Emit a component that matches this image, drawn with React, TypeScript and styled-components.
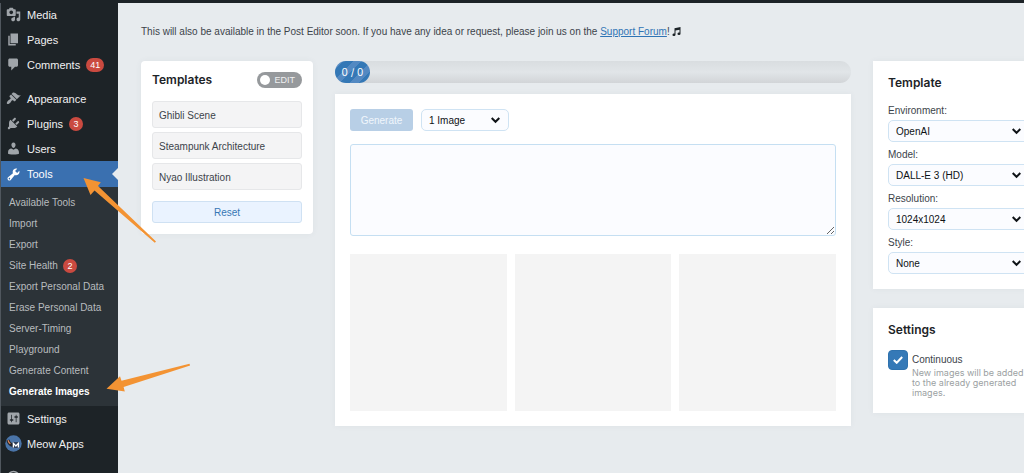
import React from "react";
import styled, { createGlobalStyle, css } from "styled-components";

const GlobalStyle = createGlobalStyle`
  *, *::before, *::after { box-sizing: border-box; }
  body {
    margin: 0;
    background: #e7ebee;
    color: #3c434a;
    font-family: "Liberation Sans", Arial, sans-serif;
    font-size: 10px;
    line-height: 16px;
    overflow: hidden;
  }
  button, select, textarea, input { font-family: inherit; margin: 0; }
`;

const Page = styled.div`
  min-height: 100vh;
  display: flex;
  flex-direction: column;
`;

const AdminBar = styled.header`
  flex: none;
  height: 3px;
  background: #1d2327;
`;

const Body = styled.div`
  flex: 1;
  display: flex;
`;

const Sidebar = styled.nav`
  flex: none;
  width: 118px;
  height: calc(100vh - 3px);
  overflow: hidden;
  background: #1d2327;
  border-left: 1px solid #50575e;
`;

const Menu = styled.ul`
  list-style: none;
  margin: -1px 0 0;
  padding: 0;
`;

const MenuItem = styled.li<{ $gap?: boolean }>`
  margin-top: ${(p) => (p.$gap ? "9px" : "0")};
`;

const MenuLink = styled.a<{ $active?: boolean }>`
  position: relative;
  display: flex;
  align-items: center;
  gap: 6px;
  height: ${(p) => (p.$active ? "26px" : "25px")};
  padding-left: 5px;
  color: #f0f0f1;
  font-size: 11px;
  text-decoration: none;
  white-space: nowrap;
  ${(p) =>
    p.$active &&
    css`
      background: #3a70b0;
      color: #fff;
      &::after {
        content: "";
        position: absolute;
        right: 0;
        top: 7px;
        border: 6px solid transparent;
        border-left: 0;
        border-right-color: #e7ebee;
      }
    `}
`;

const MenuIcon = styled.svg<{ $active?: boolean }>`
  flex: none;
  width: 15px;
  height: 15px;
  fill: ${(p) => (p.$active ? "#fff" : "#a0a5aa")};
`;

const Logo = styled.svg`
  flex: none;
  width: 17px;
  height: 17px;
  margin: 0 -1px;
`;

const Badge = styled.span`
  min-width: 14px;
  height: 14px;
  padding: 0 4px;
  border-radius: 7px;
  background: #ca4a40;
  color: #fff;
  font-size: 9px;
  line-height: 14px;
  text-align: center;
`;

const SubMenu = styled.ul`
  list-style: none;
  margin: 0;
  padding: 5px 0 4px;
  background: #2c3338;
`;

const SubLink = styled.a<{ $current?: boolean }>`
  display: flex;
  align-items: center;
  gap: 5px;
  height: 21px;
  padding-left: 8px;
  color: ${(p) => (p.$current ? "#fff" : "#b8bcbf")};
  font-weight: ${(p) => (p.$current ? 700 : 400)};
  text-decoration: none;
  white-space: nowrap;
`;

const Main = styled.main`
  flex: 1;
  min-width: 0;
  overflow: hidden;
  padding: 21px 0 0 23px;
`;

const Intro = styled.p`
  margin: 0 0 21px;
`;

const TextLink = styled.a`
  color: #2f74b5;
`;

const Note = styled.svg`
  width: 9px;
  height: 9px;
  vertical-align: -1px;
  fill: #1d2327;
`;

const Columns = styled.div`
  display: grid;
  grid-template-columns: minmax(0, 1fr) minmax(0, 3fr) minmax(0, 1fr);
  gap: 22px;
  align-items: start;
  margin-right: -21px;
`;

const Column = styled.div`
  display: flex;
  flex-direction: column;
  gap: 19px;
`;

const Card = styled.section<{ $narrow?: boolean }>`
  padding: ${(p) => (p.$narrow ? "11px" : "15px")};
  border-radius: ${(p) => (p.$narrow ? "4px" : "0")};
  background: #fff;
  box-shadow: 0 0 6px rgba(60, 80, 100, 0.06);
`;

const Title = styled.h2`
  margin: 0;
  color: #1d2327;
  font-family: Inter, "Liberation Sans", sans-serif;
  font-size: 12px;
  font-weight: 600;
  line-height: 14px;
`;

const CardHeader = styled.div`
  display: flex;
  align-items: center;
  justify-content: space-between;
  margin-bottom: 13px;
`;

const Toggle = styled.button`
  display: flex;
  align-items: center;
  justify-content: space-between;
  width: 45px;
  height: 16px;
  padding: 0 7px 0 3px;
  border: 0;
  border-radius: 8px;
  background: #96999c;
  color: #f0f0f1;
  font-size: 9px;
  line-height: 16px;
`;

const Knob = styled.span`
  width: 10px;
  height: 10px;
  border-radius: 50%;
  background: #fff;
`;

const TemplateList = styled.div`
  display: flex;
  flex-direction: column;
  gap: 4px;
  margin-bottom: 11px;
`;

const TemplateButton = styled.button`
  height: 27px;
  padding: 1px 6px 0;
  border: 1px solid #e6e7e9;
  border-radius: 3px;
  background: #f4f4f5;
  color: #3c434a;
  font-size: 10px;
  text-align: left;
`;

const ResetButton = styled.button`
  display: block;
  width: 100%;
  height: 22px;
  padding: 0;
  border: 1px solid #cfe1f3;
  border-radius: 3px;
  background: #eaf3ff;
  color: #3677b5;
  font-size: 10px;
`;

const Progress = styled.div`
  height: 22px;
  margin-bottom: 11px;
  border-radius: 11px;
  background: linear-gradient(#d9dde0, #e1e5e8 50%, #d2d5d8);
`;

const ProgressPill = styled.div`
  width: 35px;
  height: 22px;
  border-radius: 11px;
  background: repeating-linear-gradient(135deg, #5389c2 0 6px, #3478b6 6px 13px);
  color: #fff;
  font-family: Inter, "Liberation Sans", sans-serif;
  font-size: 10px;
  line-height: 22px;
  text-align: center;
`;

const Toolbar = styled.div`
  display: flex;
  gap: 8px;
  margin-bottom: 13px;
`;

const GenerateButton = styled.button`
  width: 63px;
  height: 22px;
  padding: 0;
  border: 0;
  border-radius: 3px;
  background: #b8cfe6;
  color: #f0f6fc;
  font-size: 10px;
`;

const SelectBox = styled.div<{ $width?: string }>`
  position: relative;
  width: ${(p) => p.$width ?? "100%"};
`;

const NativeSelect = styled.select`
  display: block;
  appearance: none;
  width: 100%;
  height: 22px;
  padding: 0 24px 0 7px;
  border: 1px solid #cfe3f3;
  border-radius: 5px;
  background: #fbfcff;
  color: #0e1216;
  font-size: 10px;
`;

const Chevron = styled.svg`
  position: absolute;
  right: 9px;
  top: 7px;
  width: 9px;
  height: 8px;
  fill: none;
  stroke: #101418;
  stroke-width: 2;
  pointer-events: none;
`;

const Prompt = styled.textarea`
  display: block;
  width: 100%;
  height: 92px;
  margin-bottom: 18px;
  padding: 6px 8px;
  border: 1px solid #c5dff2;
  border-radius: 3px;
  background: #fbfcff;
  resize: vertical;
`;

const Gallery = styled.div`
  display: grid;
  grid-template-columns: repeat(3, 1fr);
  gap: 8px;
`;

const Placeholder = styled.div`
  aspect-ratio: 1;
  background: #f4f4f4;
`;

const Fields = styled.div`
  display: flex;
  flex-direction: column;
  gap: 4px;
  margin-top: 12px;
`;

const FieldLabel = styled.label`
  display: block;
  line-height: 18px;
`;

const CheckRow = styled.div`
  display: flex;
  gap: 4px;
  margin-top: 13px;
`;

const CheckBox = styled.span`
  position: relative;
  flex: none;
  width: 20px;
  height: 20px;
`;

const CheckInput = styled.input`
  appearance: none;
  display: block;
  width: 20px;
  height: 20px;
  border: 1px solid #2f72ae;
  border-radius: 4px;
  background: #3579b7;
`;

const CheckMark = styled.svg`
  position: absolute;
  left: 5px;
  top: 6px;
  width: 10px;
  height: 8px;
  fill: none;
  stroke: #fff;
  stroke-width: 2;
  pointer-events: none;
`;

const CheckLabel = styled.label`
  display: block;
  padding-top: 2px;
`;

const Hint = styled.p`
  width: 114px;
  margin: 0;
  color: #9b9fa2;
  font-family: Inter, "Liberation Sans", sans-serif;
  font-size: 9px;
  line-height: 10px;
`;

const Pointer = styled.svg<{ $x: number; $y: number }>`
  position: absolute;
  left: ${(p) => p.$x}px;
  top: ${(p) => p.$y}px;
  fill: #f39333;
  pointer-events: none;
`;

const icons = {
  media:
    "M13 11V4c0-.55-.45-1-1-1h-1.67L9 1H5L3.67 3H2c-.55 0-1 .45-1 1v7c0 .55.45 1 1 1h10c.55 0 1-.45 1-1zM7 4.5c1.38 0 2.5 1.12 2.5 2.5S8.38 9.5 7 9.5 4.5 8.38 4.5 7 5.62 4.5 7 4.5zM14 6h5v10.5c0 1.38-1.12 2.5-2.5 2.5S14 17.88 14 16.5s1.12-2.5 2.5-2.5c.17 0 .34.02.5.05V9h-3V6zm-4 8.05V13h2v3.5c0 1.38-1.12 2.5-2.5 2.5S7 17.88 7 16.5 8.12 14 9.5 14c.17 0 .34.02.5.05z",
  pages: "M6 15V2h10v13H6zm-1 1h8v2H3V5h2v11z",
  comments:
    "M5 2h9c1.1 0 2 .9 2 2v7c0 1.1-.9 2-2 2h-2l-5 5v-5H5c-1.1 0-2-.9-2-2V4c0-1.1.9-2 2-2z",
  appearance:
    "M14.48 11.06L7.41 3.99l1.5-1.5c.5-.56 2.3-.47 3.51.32 1.21.8 1.43 1.28 2.91 2.1 1.18.64 2.45 1.26 4.45.85zm-.71.71L6.7 4.7 4.93 6.47c-.39.39-.39 1.02 0 1.41l1.06 1.06c.39.39.39 1.03 0 1.42-.6.6-1.43 1.11-2.21 1.69-.35.26-.7.53-1.01.84C1.43 14.23.4 16.08 1.4 17.07c.99 1 2.84-.03 4.18-1.36.31-.31.58-.66.85-1.02.57-.78 1.08-1.61 1.69-2.21.39-.39 1.02-.39 1.41 0l1.06 1.06c.39.39 1.02.39 1.41 0z",
  plugins:
    "M13.11 4.36L9.87 7.6 8 5.73l3.24-3.24c.35-.34 1.05-.2 1.56.32.52.51.66 1.21.31 1.55zm-8 1.77l.91-1.12 9.01 9.01-1.19.84c-.71.71-2.63 1.16-3.82 1.16H6.14L4.9 17.26c-.59.59-1.54.59-2.12 0-.59-.58-.59-1.53 0-2.12l1.24-1.24v-3.88c0-1.13.4-3.19 1.09-3.89zm7.26 3.97l3.24-3.24c.34-.35 1.04-.21 1.55.31.52.51.66 1.21.31 1.55l-3.24 3.25z",
  users:
    "M10 9.25c-2.27 0-2.73-3.44-2.73-3.44C7 4.02 7.82 2 9.97 2c2.16 0 2.98 2.02 2.71 3.81 0 0-.41 3.44-2.68 3.44zm0 2.57L12.72 10c2.39 0 4.52 2.33 4.52 4.53v2.49s-3.65 1.13-7.24 1.13c-3.65 0-7.24-1.13-7.24-1.13v-2.49c0-2.25 1.94-4.48 4.47-4.48z",
  tools:
    "M16.68 9.77c-1.34 1.34-3.3 1.67-4.95.99l-5.41 6.52c-.99.99-2.59.99-3.58 0s-.99-2.59 0-3.57l6.52-5.42c-.68-1.65-.35-3.61.99-4.95 1.28-1.28 3.12-1.62 4.72-1.06l-2.89 2.89 2.82 2.82 2.86-2.87c.53 1.58.18 3.39-1.08 4.65zM3.81 16.21c.4.39 1.04.39 1.43 0 .4-.4.4-1.04 0-1.43-.39-.4-1.03-.4-1.43 0-.39.39-.39 1.03 0 1.43z",
  settings:
    "M18 16V4c0-1.1-.9-2-2-2H4c-1.1 0-2 .9-2 2v12c0 1.1.9 2 2 2h12c1.1 0 2-.9 2-2zM8 11h1c.55 0 1 .45 1 1s-.45 1-1 1H8v1.5c0 .28-.22.5-.5.5s-.5-.22-.5-.5V13H6c-.55 0-1-.45-1-1s.45-1 1-1h1V5.5c0-.28.22-.5.5-.5s.5.22.5.5V11zm5-2h-1c-.55 0-1-.45-1-1s.45-1 1-1h1V5.5c0-.28.22-.5.5-.5s.5.22.5.5V7h1c.55 0 1 .45 1 1s-.45 1-1 1h-1v5.5c0 .28-.22.5-.5.5s-.5-.22-.5-.5V9z",
  collapse:
    "M10 1a8.500 8.500 0 1 0 0 17 8.500 8.500 0 0 0 0-17zm0 2a6.500 6.500 0 1 1 0 13 6.500 6.500 0 0 1 0-13zm2 3v7L7.500 9.500z",
};

type ItemProps = {
  icon: keyof typeof icons;
  label?: string;
  count?: number;
  gap?: boolean;
  active?: boolean;
  children?: React.ReactNode;
};

function Item({ icon, label, count, gap, active, children }: ItemProps) {
  return (
    <MenuItem $gap={gap}>
      <MenuLink href="#" $active={active} aria-label={label ? undefined : icon}>
        <MenuIcon viewBox="0 0 20 20" $active={active} aria-hidden="true">
          <path d={icons[icon]} />
        </MenuIcon>
        {label}
        {count !== undefined && <Badge>{count}</Badge>}
      </MenuLink>
      {children}
    </MenuItem>
  );
}

const toolLinks: { label: string; count?: number; current?: boolean }[] = [
  { label: "Available Tools" },
  { label: "Import" },
  { label: "Export" },
  { label: "Site Health", count: 2 },
  { label: "Export Personal Data" },
  { label: "Erase Personal Data" },
  { label: "Server-Timing" },
  { label: "Playground" },
  { label: "Generate Content" },
  { label: "Generate Images", current: true },
];

const fields = [
  { id: "environment", label: "Environment:", value: "OpenAI" },
  { id: "model", label: "Model:", value: "DALL-E 3 (HD)" },
  { id: "resolution", label: "Resolution:", value: "1024x1024" },
  { id: "style", label: "Style:", value: "None" },
];

type SelectProps = { id: string; value: string; width?: string; label?: string };

function Select({ id, value, width, label }: SelectProps) {
  return (
    <SelectBox $width={width}>
      <NativeSelect id={id} aria-label={label}>
        <option>{value}</option>
      </NativeSelect>
      <Chevron viewBox="0 0 9 8" aria-hidden="true">
        <path d="M0.700 2l3.800 3.800L8.300 2" />
      </Chevron>
    </SelectBox>
  );
}

export default function App() {
  return (
    <Page>
      <GlobalStyle />
      <AdminBar />
      <Body>
        <Sidebar aria-label="Admin menu">
          <Menu>
            <Item icon="media" label="Media" />
            <Item icon="pages" label="Pages" />
            <Item icon="comments" label="Comments" count={41} />
            <Item icon="appearance" label="Appearance" gap />
            <Item icon="plugins" label="Plugins" count={3} />
            <Item icon="users" label="Users" />
            <Item icon="tools" label="Tools" active>
              <SubMenu>
                {toolLinks.map((t) => (
                  <li key={t.label}>
                    <SubLink href="#" $current={t.current}>
                      {t.label}
                      {t.count !== undefined && <Badge>{t.count}</Badge>}
                    </SubLink>
                  </li>
                ))}
              </SubMenu>
            </Item>
            <Item icon="settings" label="Settings" />
            <MenuItem>
              <MenuLink href="#">
                <Logo viewBox="0 0 17 17" aria-hidden="true">
                  <circle cx="8.500" cy="8.500" r="8.200" fill="#4a74a8" />
                  <path d="M2.800 5c.8 3 2.700 4.800 5.200 5.600" fill="none" stroke="#23252b" strokeWidth="3" />
                  <path d="M3 5.200c.5 1.600 1.300 2.800 2.400 3.600" fill="none" stroke="#e08a5c" strokeWidth="1.200" />
                  <path d="M7.500 7h6.800v6H7.500z" fill="#30405a" />
                  <path d="M8.400 12.400V8.300l2.500 2.700 2.500-2.700v4.100" fill="none" stroke="#fff" strokeWidth="1.300" />
                </Logo>
                Meow Apps
              </MenuLink>
            </MenuItem>
            <Item icon="collapse" gap />
          </Menu>
        </Sidebar>
        <Main>
          <Intro>
            This will also be available in the Post Editor soon. If you have any idea or request,
            please join us on the <TextLink href="#">Support Forum</TextLink>!{" "}
            <Note viewBox="0 0 18 18" role="img" aria-label="music">
              <path d="M5 2.500L17 0v13.500a3 2.500 0 1 1-2-2.300V5.500L7 7v8.500a3 2.500 0 1 1-2-2.300z" />
            </Note>
          </Intro>
          <Columns>
            <Card $narrow>
              <CardHeader>
                <Title>Templates</Title>
                <Toggle type="button" aria-pressed="false">
                  <Knob />
                  EDIT
                </Toggle>
              </CardHeader>
              <TemplateList>
                <TemplateButton type="button">Ghibli Scene</TemplateButton>
                <TemplateButton type="button">Steampunk Architecture</TemplateButton>
                <TemplateButton type="button">Nyao Illustration</TemplateButton>
              </TemplateList>
              <ResetButton type="button">Reset</ResetButton>
            </Card>
            <div>
              <Progress>
                <ProgressPill>0 / 0</ProgressPill>
              </Progress>
              <Card>
                <Toolbar>
                  <GenerateButton type="button">Generate</GenerateButton>
                  <Select id="count" value="1 Image" width="88px" label="Number of images" />
                </Toolbar>
                <Prompt aria-label="Prompt" />
                <Gallery>
                  <Placeholder />
                  <Placeholder />
                  <Placeholder />
                </Gallery>
              </Card>
            </div>
            <Column>
              <Card>
                <Title>Template</Title>
                <Fields>
                  {fields.map((f) => (
                    <div key={f.id}>
                      <FieldLabel htmlFor={f.id}>{f.label}</FieldLabel>
                      <Select id={f.id} value={f.value} />
                    </div>
                  ))}
                </Fields>
              </Card>
              <Card>
                <Title>Settings</Title>
                <CheckRow>
                  <CheckBox>
                    <CheckInput type="checkbox" id="continuous" defaultChecked />
                    <CheckMark viewBox="0 0 10 8" aria-hidden="true">
                      <path d="M0.800 4l2.900 2.800L9.200 1" />
                    </CheckMark>
                  </CheckBox>
                  <div>
                    <CheckLabel htmlFor="continuous">Continuous</CheckLabel>
                    <Hint>New images will be added to the already generated images.</Hint>
                  </div>
                </CheckRow>
              </Card>
            </Column>
          </Columns>
        </Main>
      </Body>
      <Pointer $x={83} $y={177} width="74" height="67" viewBox="83 177 74 67" aria-hidden="true">
        <path d="M83.500 178l17.300 4.300-2.800 3.800L156 241.500l-1.200 1.200L94.500 190.500l-4 4.500z" />
      </Pointer>
      <Pointer $x={106} $y={363} width="86" height="30" viewBox="106 363 86 30" aria-hidden="true">
        <path d="M106.500 388.800L120 376.200l1.500 4.600 68-17 .6 1.600L123.600 387l1.200 4.500z" />
      </Pointer>
    </Page>
  );
}
